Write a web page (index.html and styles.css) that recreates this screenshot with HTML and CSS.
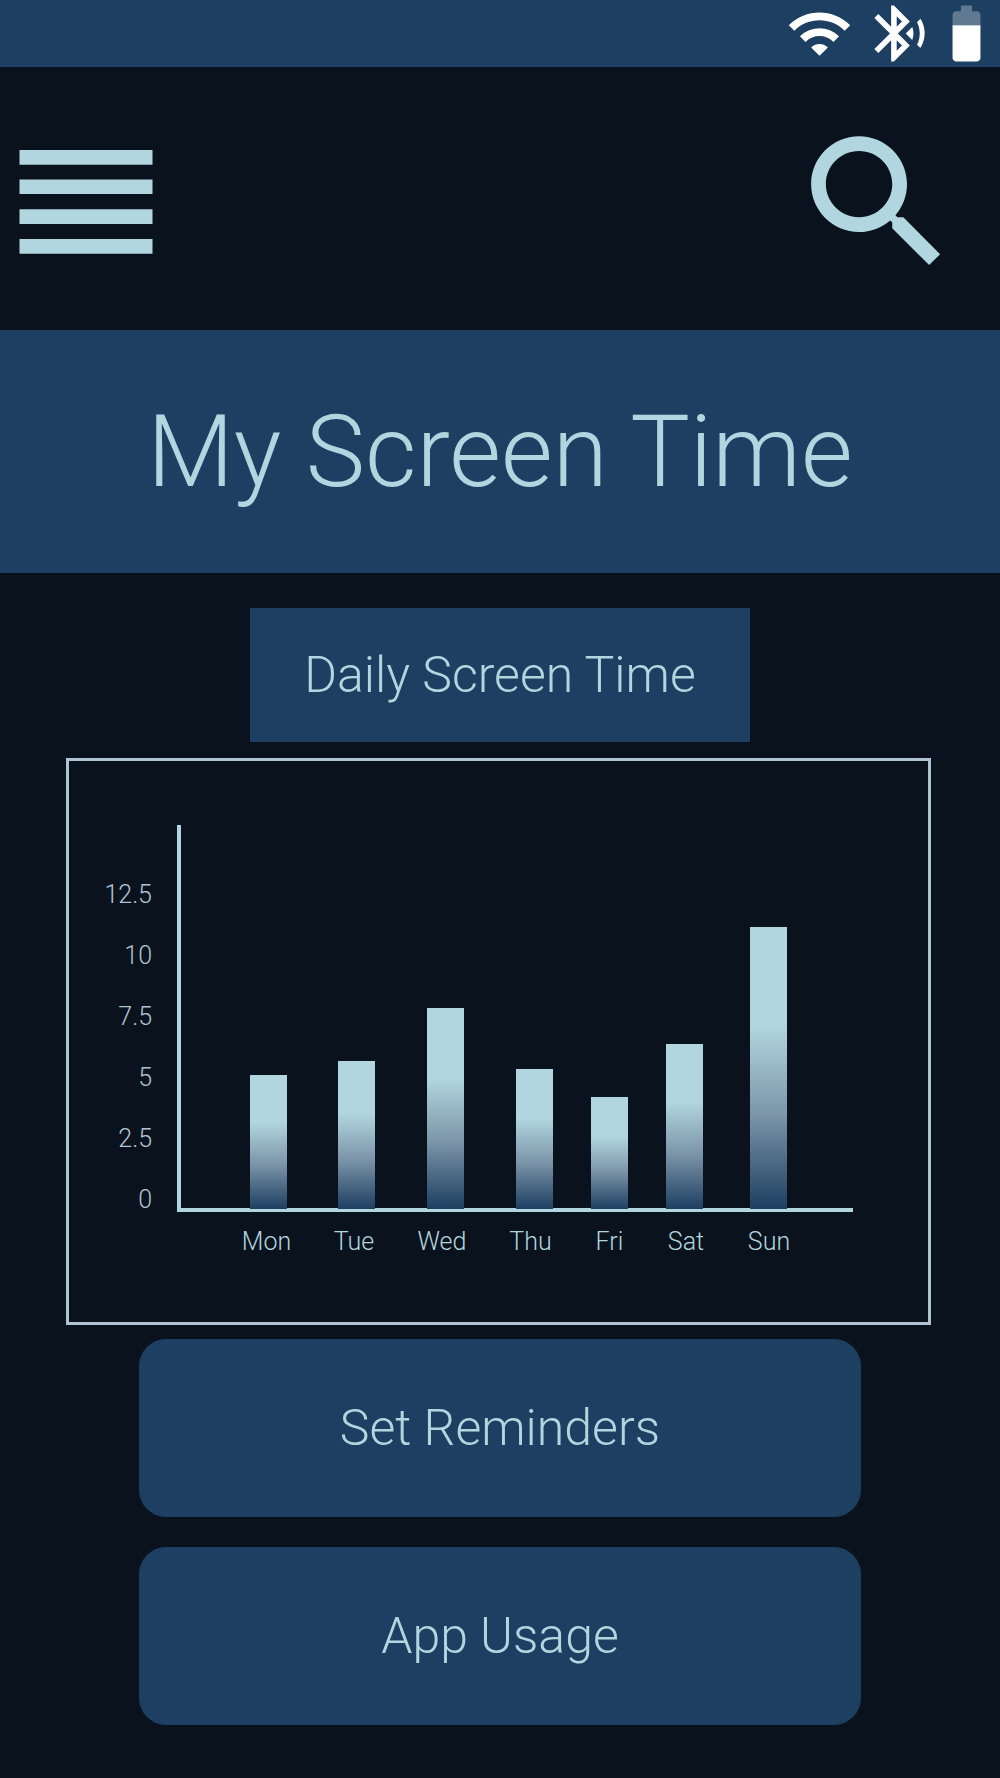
FILE: index.html
```html
<!DOCTYPE html>
<html lang="en">
<head>
<meta charset="utf-8">
<meta name="viewport" content="width=device-width, initial-scale=1">
<title>My Screen Time</title>
<link rel="stylesheet" href="styles.css">
</head>
<body>
<div class="status-bar">
  <svg class="status-icon wifi" viewBox="0 0 24 24" role="img" aria-label="Wi-Fi"><path d="M1 9l2 2c4.97-4.97 13.03-4.97 18 0l2-2C16.93 2.93 7.08 2.93 1 9zm8 8l3 3 3-3c-1.65-1.66-4.34-1.66-6 0zm-4-4l2 2c2.76-2.76 7.24-2.76 10 0l2-2C15.14 9.14 8.87 9.14 5 13z"/></svg>
  <svg class="status-icon" viewBox="0 0 24 24" role="img" aria-label="Bluetooth"><path d="M14.24 12.01l2.32 2.32c.28-.72.44-1.51.44-2.33 0-.82-.16-1.59-.43-2.31l-2.33 2.32zm5.29-5.3l-1.26 1.26c.63 1.21.98 2.57.98 4.02s-.36 2.82-.98 4.02l1.2 1.2c.97-1.54 1.54-3.36 1.54-5.31-.01-1.89-.55-3.67-1.48-5.19zm-3.82 1L10 2H9v7.59L4.41 5 3 6.41 8.59 12 3 17.59 4.41 19 9 14.41V22h1l5.71-5.71-4.3-4.29 4.3-4.29zM11 5.83l1.88 1.88L11 9.59V5.83zm1.88 10.46L11 18.17v-3.76l1.88 1.88z"/></svg>
  <svg class="status-icon" viewBox="0 0 24 24" role="img" aria-label="Battery"><path fill-opacity=".3" d="M17 5.33C17 4.6 16.4 4 15.67 4H14V2h-4v2H8.33C7.6 4 7 4.6 7 5.33V9h10V5.33z"/><path d="M7 9v11.67C7 21.4 7.6 22 8.33 22h7.33c.74 0 1.34-.6 1.34-1.33V9H7z"/></svg>
</div>

<header class="toolbar">
  <button class="icon-button" type="button" aria-label="Menu">
    <svg class="menu-icon" viewBox="0 0 134 106"><path d="M.5 0h133v14.7H.5zM.5 29.5h133V44H.5zM.5 59.2h133V74H.5zM.5 89h133v14.7H.5z"/></svg>
  </button>
  <button class="icon-button" type="button" aria-label="Search">
    <svg class="search-icon" viewBox="0 0 24 24"><path d="M15.5 14h-.79l-.28-.27C15.41 12.59 16 11.11 16 9.5 16 5.91 13.09 3 9.5 3S3 5.91 3 9.5 5.91 16 9.5 16c1.61 0 3.09-.59 4.23-1.57l.27.28v.79l5 4.99L20.49 19l-4.99-5zm-6 0C7.01 14 5 11.99 5 9.5S7.01 5 9.5 5 14 7.01 14 9.5 11.99 14 9.5 14z"/></svg>
  </button>
</header>

<h1 class="title">My Screen Time</h1>

<main class="content">
  <h2 class="chart-title">Daily Screen Time</h2>

  <section class="chart" aria-label="Daily screen time in hours">
    <div class="y-axis">
      <span>12.5</span><span>10</span><span>7.5</span><span>5</span><span>2.5</span><span>0</span>
    </div>
    <div class="plot">
      <div class="bar" style="height:134px"></div>
      <div class="bar" style="height:148px"></div>
      <div class="bar" style="height:201px"></div>
      <div class="bar" style="height:140px"></div>
      <div class="bar" style="height:112px"></div>
      <div class="bar" style="height:165px"></div>
      <div class="bar" style="height:282px"></div>
    </div>
    <div class="x-axis">
      <span>Mon</span><span>Tue</span><span>Wed</span><span>Thu</span><span>Fri</span><span>Sat</span><span>Sun</span>
    </div>
  </section>

  <div class="actions">
    <button class="action" type="button">Set Reminders</button>
    <button class="action" type="button">App Usage</button>
  </div>
</main>
</body>
</html>
```
FILE: styles.css
```css
:root {
  --night: #0a121d;
  --navy: #1d3f61;
  --ice: #b1d6df;
  --frame: #b0c3d3;
}

* {
  box-sizing: border-box;
}

body {
  margin: 0;
  background: var(--night);
  color: var(--ice);
  font-family: Roboto, "Liberation Sans", sans-serif;
  font-weight: 300;
}

.status-bar {
  display: flex;
  justify-content: flex-end;
  background: var(--navy);
}

.status-icon {
  width: 67px;
  height: 67px;
  fill: #fff;
}

.wifi {
  margin-right: 13px;
}

.toolbar {
  display: flex;
  justify-content: space-between;
  align-items: center;
  padding: 47px 34px 39px 19px;
}

.icon-button {
  display: block;
  padding: 0;
  border: 0;
  background: none;
  cursor: pointer;
}

.icon-button svg {
  display: block;
  fill: var(--ice);
}

.menu-icon {
  width: 134px;
  height: 106px;
}

.search-icon {
  width: 177px;
  height: 177px;
}

.title {
  margin: 0;
  padding: 62px 0 61px;
  background: var(--navy);
  font-size: 100px;
  font-weight: 300;
  line-height: 120px;
  text-align: center;
}

.content {
  padding: 35px 0 53px;
}

.chart-title {
  width: 50%;
  margin: 0 auto 16px;
  padding: 37px 0;
  background: var(--navy);
  font-size: 50px;
  font-weight: 300;
  line-height: 60px;
  text-align: center;
}

.chart {
  display: grid;
  grid-template-columns: 108px 1fr;
  row-gap: 15px;
  margin: 0 69px 14px 66px;
  padding: 64px 75px 65px 0;
  border: 3px solid var(--frame);
  font-size: 25px;
}

.y-axis {
  display: flex;
  flex-direction: column;
  justify-content: flex-end;
  gap: 37px;
  padding-right: 25px;
  color: var(--frame);
  line-height: 24px;
  text-align: right;
}

.plot {
  display: grid;
  grid-template-columns: 88fr 89fr 89fr 89fr 61fr 89fr 79fr;
  justify-items: center;
  align-items: end;
  height: 387px;
  padding: 0 45px 0 43px;
  border-left: 4px solid var(--ice);
  border-bottom: 4px solid var(--ice);
}

.bar {
  width: 37px;
  margin-bottom: -1px;
  background: linear-gradient(var(--ice) 35%, #7d96aa 66%, var(--navy));
}

.x-axis {
  display: grid;
  grid-column: 2;
  grid-template-columns: 87fr 88fr 88fr 89fr 69fr 84fr 82fr;
  padding: 0 43px 0 46px;
  line-height: 30px;
  text-align: center;
}

.actions {
  display: grid;
  gap: 30px;
  padding: 0 139px;
}

.action {
  padding: 59px 0;
  border: 0;
  border-radius: 27px;
  background: var(--navy);
  color: inherit;
  font: inherit;
  font-size: 50px;
  line-height: 60px;
  cursor: pointer;
}
```
